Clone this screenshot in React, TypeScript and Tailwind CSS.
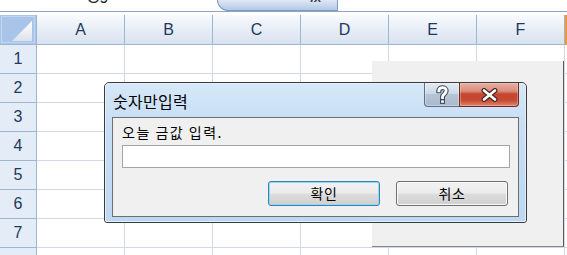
import React from "react";

const KR = { fontFamily: '"Noto Sans CJK KR", "Noto Sans", sans-serif' };

function HelpGlyph() {
  return (
    <svg width="13" height="20" viewBox="0 0 13 20" className="block">
      <path d="M2.8 5.8 C2.8 1.6 10.2 1.6 10.2 5.8 C10.2 9 6.5 9.2 6.5 12 L6.5 12.5" fill="none" stroke="#3f4b5c" strokeWidth="5" strokeLinecap="square" />
      <rect x="4" y="14.3" width="5" height="4.6" fill="#3f4b5c" />
      <path d="M2.8 5.8 C2.8 1.6 10.2 1.6 10.2 5.8 C10.2 9 6.5 9.2 6.5 12 L6.5 12.5" fill="none" stroke="#ffffff" strokeWidth="2.8" strokeLinecap="square" />
      <rect x="5.1" y="15.4" width="2.8" height="2.4" fill="#ffffff" />
    </svg>
  );
}

function CloseGlyph() {
  return (
    <svg width="17" height="14" viewBox="0 0 17 14" className="block">
      <path d="M3 2.5 L14 11.5 M14 2.5 L3 11.5" stroke="#4a2a24" strokeWidth="5" strokeLinecap="round" />
      <path d="M3 2.5 L14 11.5 M14 2.5 L3 11.5" stroke="#ffffff" strokeWidth="2.6" strokeLinecap="round" />
    </svg>
  );
}

export default function App() {
  const cols = ["A", "B", "C", "D", "E", "F"];
  const rows = [1, 2, 3, 4, 5, 6, 7, 8];
  return (
    <div
      className="relative w-[567px] h-[255px] overflow-hidden bg-white"
      style={{ fontFamily: '"Liberation Sans", Arial, sans-serif' }}
    >
      {/* formula bar remnant */}
      <div className="flex h-[12px] border-b border-[#8ea4c1]">
        <div className="w-[87px] shrink-0" />
        <div className="relative w-[130px] h-[11px] shrink-0 overflow-hidden">
          <span className="absolute left-0 top-[-10px] text-[16px] leading-[16px] text-[#222]">G9</span>
        </div>
        <div className="relative w-[121px] h-[11px] shrink-0 overflow-hidden rounded-bl-[12px] border-l border-r border-b border-[#7d9ac1] bg-[linear-gradient(to_bottom,#dfe8f5,#b3c9e5)]">
          <span className="absolute left-[92px] top-[-9px] text-[13px] leading-[13px] italic font-bold text-[#444]">fx</span>
        </div>
      </div>
      <div className="h-[3px]" />

      {/* grid */}
      <div className="grid grid-cols-[37px_repeat(6,88px)_1fr] grid-rows-[30px_repeat(7,29px)_29px]">
        <div className="relative border-r border-b border-[#9eb6ce] bg-[#a9c4e9]">
          <div className="absolute inset-[1px] border border-[#c3d6f1]" />
          <svg width="37" height="30" className="absolute left-0 top-0">
            <defs>
              <linearGradient id="tri" x1="0" y1="0" x2="0" y2="1">
                <stop offset="0" stopColor="#ffffff" />
                <stop offset="1" stopColor="#dde2ea" />
              </linearGradient>
            </defs>
            <polygon points="12,26 32,26 32,6" fill="url(#tri)" />
          </svg>
        </div>
        {cols.map((c) => (
          <div
            key={c}
            className="flex items-center justify-center border-r border-b border-[#9eb6ce] bg-[linear-gradient(to_bottom,#f8fafd,#e4ebf5_60%,#d8e2ef)] text-[16px] text-[#22395a]"
          >
            {c}
          </div>
        ))}
        <div className="border-b border-[#f29536] border-l-2 border-l-[#f29536] bg-[linear-gradient(to_bottom,#fde8c0,#f8c476)]" />
        {rows.map((r) => (
          <React.Fragment key={r}>
            <div className="flex items-center justify-center border-r border-b border-[#9eb6ce] bg-[#e4ecf7] text-[16px] text-[#22395a]">
              {r < 8 ? r : null}
            </div>
            {cols.map((c) => (
              <div key={c} className="border-r border-b border-[#d0d7e5]" />
            ))}
            <div className="border-b border-[#d0d7e5]" />
          </React.Fragment>
        ))}
      </div>

      {/* background window remnant */}
      <div className="absolute left-[372px] top-[61px] w-[192px] h-[186px] bg-[#f0f0f0] border-r border-b border-r-[#5c5c5c] border-b-[#858585]" />

      {/* dialog */}
      <div
        className="absolute left-[104px] top-[82px] w-[423px] h-[141px] rounded-t-[5px] rounded-b-[3px] border border-[#3b3b3b] bg-[linear-gradient(to_bottom,#d6e8f9_0%,#c7def5_30%,#bdd8f3_100%)] px-[7px] pb-[5px]"
        style={KR}
      >
        <div className="pointer-events-none absolute inset-0 rounded-t-[4px] rounded-b-[2px] border border-[#e4effb]" />
        <div className="h-[34px] pl-[1px] pt-[8px] text-[16px] leading-[20px] tracking-[0.3px] text-black">숫자만입력</div>

        <div className="absolute right-[7px] top-0 flex h-[24px]">
          <div className="flex w-[35px] items-center justify-center rounded-bl-[4px] border-l border-b border-[#5d6e86] bg-[linear-gradient(to_bottom,#e3ebf4_0%,#cdd9e6_45%,#b6c5d6_50%,#a8b9cc_100%)] shadow-[inset_0_0_0_1px_rgba(255,255,255,0.35)]">
            <HelpGlyph />
          </div>
          <div className="flex w-[60px] items-center justify-center rounded-br-[4px] border-l border-r border-b border-[#6b2e24] bg-[linear-gradient(to_bottom,#e6b0a4_0%,#d98e7e_35%,#c5452d_48%,#c84a32_75%,#de866f_100%)] shadow-[inset_0_0_0_1px_rgba(255,220,210,0.35)]">
            <CloseGlyph />
          </div>
        </div>

        <div className="h-[100px] border border-[#6e6e6e] bg-[#f0f0f0] pl-[9px] pr-[8px]">
          <div className="pt-[6px] text-[14px] leading-[16px] tracking-[1.5px] text-black">오늘 금값 입력.</div>
          <div className="mt-[5px] h-[23px] border border-[#a5a5a5] bg-white" />
          <div className="mt-[13px] flex justify-end gap-[16px] pr-[2px]">
            <div className="flex h-[25px] w-[112px] items-center justify-center rounded-[3px] border border-[#3c7fb1] bg-[linear-gradient(to_bottom,#f2f2f2_0%,#ebebeb_48%,#dddddd_52%,#cfcfcf_100%)] text-[14px] tracking-[0.5px] text-black shadow-[inset_0_0_0_1px_#8fd8f8]">
              확인
            </div>
            <div className="flex h-[25px] w-[112px] items-center justify-center rounded-[3px] border border-[#707070] bg-[linear-gradient(to_bottom,#f2f2f2_0%,#ebebeb_48%,#dddddd_52%,#cfcfcf_100%)] text-[14px] tracking-[0.5px] text-black shadow-[inset_0_0_0_1px_#fbfbfb]">
              취소
            </div>
          </div>
        </div>
      </div>
    </div>
  );
}
